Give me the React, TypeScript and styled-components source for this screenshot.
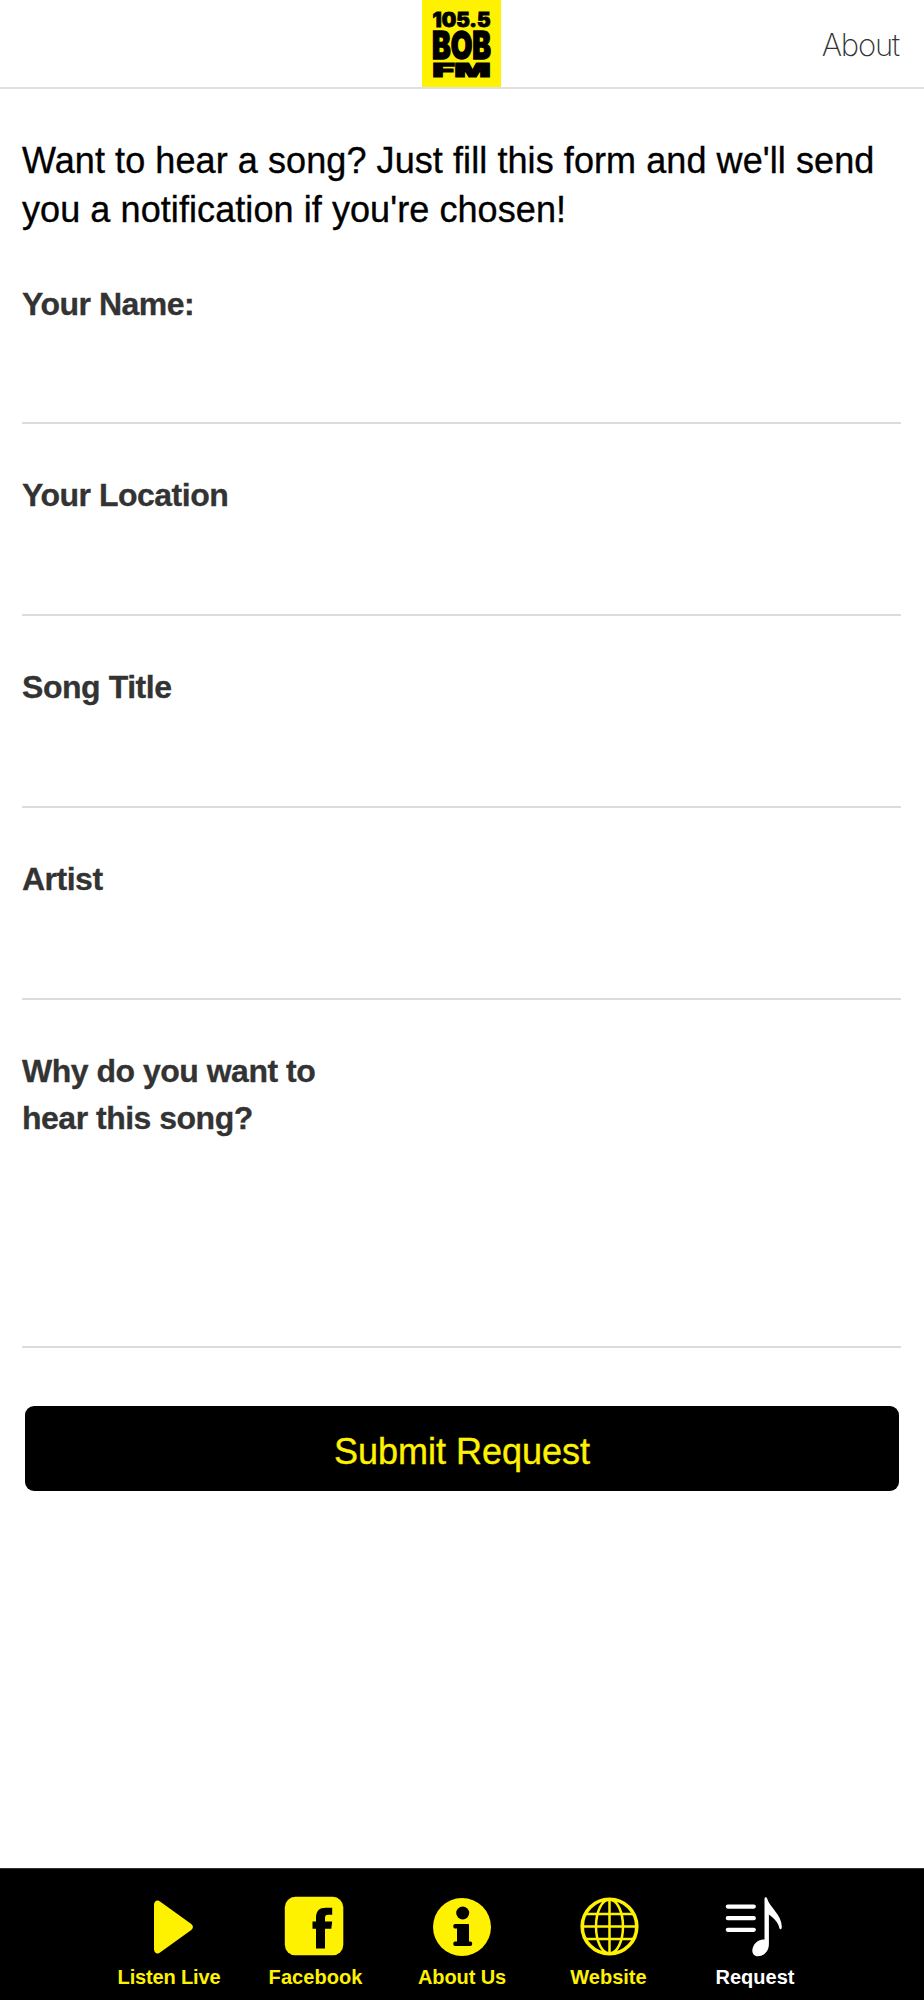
import React from "react";
import styled, { createGlobalStyle } from "styled-components";

const YELLOW = "#fff200";

const GlobalStyle = createGlobalStyle`
  * { box-sizing: border-box; }
  body {
    margin: 0;
    background: #fff;
    font-family: "Liberation Sans", Arial, sans-serif;
  }
`;

const Page = styled.div`
  display: flex;
  flex-direction: column;
  width: 924px;
  height: 2000px;
  background: #fff;
`;

const Header = styled.header`
  display: grid;
  grid-template-columns: 1fr 79px 1fr;
  height: 89px;
  padding: 0 24px 0 23px;
  border-bottom: 2px solid #e0e0e0;
`;

const Logo = styled.svg`
  grid-column: 2;
  display: block;
  width: 79px;
  height: 87px;
`;

const AboutLink = styled.a`
  justify-self: end;
  margin-right: 1px;
  font-family: Inter, "Liberation Sans", sans-serif;
  font-weight: 200;
  font-size: 31px;
  line-height: 90px;
  letter-spacing: -1.2px;
  color: #333;
`;

const Form = styled.form`
  display: flex;
  flex: 1;
  flex-direction: column;
  padding: 47px 23px 0 22px;
`;

const Intro = styled.p`
  margin: 0;
  height: 97px;
  font-size: 36px;
  line-height: 49px;
  letter-spacing: 0.08px;
  -webkit-text-stroke: 0.35px #000;
  color: #000;
  white-space: nowrap;
`;

const Field = styled.div<{ $height: number }>`
  display: flex;
  flex-direction: column;
  height: ${(p) => p.$height}px;
  padding-top: 48px;
  border-bottom: 2px solid #dcdcdc;
`;

const Label = styled.label<{ $spacing?: number }>`
  width: 330px;
  font-size: 32px;
  font-weight: 700;
  line-height: 47px;
  letter-spacing: ${(p) => p.$spacing ?? -0.5}px;
  -webkit-text-stroke: 0.3px #333;
  color: #333;
`;

const Input = styled.input`
  flex: 1;
  min-height: 0;
  padding: 0;
  border: 0;
  background: transparent;
  font-size: 32px;
  outline: none;
`;

const TextArea = styled.textarea`
  flex: 1;
  min-height: 0;
  padding: 0;
  border: 0;
  background: transparent;
  font-size: 32px;
  resize: none;
  outline: none;
`;

const SubmitButton = styled.button`
  height: 85px;
  margin: 58px 2px 0 3px;
  padding: 7px 0 0;
  border: 0;
  border-radius: 9px;
  background: #000;
  color: ${YELLOW};
  font-family: inherit;
  font-size: 36px;
  -webkit-text-stroke: 0.35px ${YELLOW};
`;

const TabBar = styled.nav`
  display: grid;
  grid-template-columns: repeat(5, 146.5px);
  justify-content: center;
  height: 132px;
  padding-top: 27px;
  border-top: 1px solid #333;
  background: #000;
`;

const Tab = styled.a<{ $active?: boolean }>`
  display: flex;
  flex-direction: column;
  align-items: center;
  color: ${(p) => (p.$active ? "#fff" : YELLOW)};
`;

const TabIcon = styled.svg`
  display: block;
  width: 60px;
  height: 62px;
  fill: currentColor;
  overflow: visible;
`;

const TabLabel = styled.span<{ $spacing: number }>`
  margin-top: 7px;
  font-size: 20px;
  font-weight: 700;
  line-height: 24px;
  letter-spacing: ${(p) => p.$spacing}px;
  white-space: nowrap;
`;

const StationLogo = () => (
  <Logo viewBox="0 0 79 87">
    <rect width="79" height="87" fill={YELLOW} />
    <g fontFamily="Inter" fontWeight="900" fill="#000" stroke="#000">
      <text x="10.5" y="26.5" fontSize="19.5" strokeWidth="0.8" textLength="58" lengthAdjust="spacingAndGlyphs">105.5</text>
      <text x="10" y="58.5" fontSize="38" strokeWidth="1.4" textLength="59" lengthAdjust="spacingAndGlyphs">BOB</text>
      <text x="10.5" y="76.7" fontSize="19" strokeWidth="1.2" textLength="58" lengthAdjust="spacingAndGlyphs">FM</text>
    </g>
  </Logo>
);

const PlayIcon = () => (
  <TabIcon viewBox="0 0 60 62">
    <path d="M15 9v44c0 4.200 3.400 5.600 6 3.600L52.300 34c2.200-1.800 2.200-4.200 0-6L21 5.400c-2.600-1.900-6-.6-6 3.600z" />
  </TabIcon>
);

const FacebookIcon = () => (
  <TabIcon viewBox="0 0 60 62">
    <rect x="-1.200" y="0.800" width="58.500" height="58.500" rx="10.500" />
    <path
      fill="#000"
      d="M30 52.500V32.800h-3.500v-7.300h3.500v-3.500c0-7.500 3.600-10.300 9.700-10.300h6.500v7h-3.700c-2.700 0-3.500 1-3.500 3.200v3.600h7.200l-.9 7.300h-6.300v19.700z"
    />
  </TabIcon>
);

const InfoIcon = () => (
  <TabIcon viewBox="0 0 60 62">
    <circle cx="30" cy="31" r="29" />
    <g fill="#000">
      <circle cx="30.700" cy="17" r="6.500" />
      <path d="M23 28h13c.7 0 1 .3 1 1v16.500h1.500c2.300 0 2.300 4.500 0 4.500H23c-2.300 0-2.300-4.500 0-4.500h2V32.500h-2c-2.300 0-2.300-4.500 0-4.500z" />
    </g>
  </TabIcon>
);

const GlobeIcon = () => (
  <TabIcon viewBox="0 0 60 62">
    <g fill="none" stroke="currentColor">
      <circle cx="30.500" cy="30.500" r="27.300" strokeWidth="3.600" />
      <ellipse cx="30.500" cy="30.500" rx="13.500" ry="27" strokeWidth="2.500" />
      <path strokeWidth="2.500" d="M30.500 4v54M3 30.500h55M7 18h47M7 43h47" />
    </g>
  </TabIcon>
);

const MusicIcon = () => (
  <TabIcon viewBox="0 0 60 62">
    <path fill="none" stroke="currentColor" strokeWidth="4.200" strokeLinecap="round" d="M2.800 10.600h26M2.800 22.200h26M2.800 33.800h26" />
    <path d="M39.500 3c0-2 2-2.400 2.600-.5 2.500 8.700 14.900 16.500 14.700 28.500-.1 3-2.300 3-2.700.3-.7-4.600-5-8.800-10.200-12.800V48c0 7.500-5.300 12.300-10.800 12.300-7.500 0-7.300-9.300-1.700-14.100 2.600-2.200 5.800-3 8.100-2.500z" />
  </TabIcon>
);

const fields = [
  { id: "name", label: "Your Name:", spacing: -0.5 },
  { id: "location", label: "Your Location", spacing: -0.5 },
  { id: "title", label: "Song Title", spacing: -0.45 },
  { id: "artist", label: "Artist", spacing: -0.5 },
];

const tabs = [
  { label: "Listen Live", Icon: PlayIcon, spacing: -0.15 },
  { label: "Facebook", Icon: FacebookIcon, spacing: 0.05 },
  { label: "About Us", Icon: InfoIcon, spacing: -0.1 },
  { label: "Website", Icon: GlobeIcon, spacing: 0 },
  { label: "Request", Icon: MusicIcon, spacing: 0, active: true },
];

export default function App() {
  return (
    <>
      <GlobalStyle />
      <Page>
        <Header>
          <StationLogo />
          <AboutLink>About</AboutLink>
        </Header>
        <Form>
          <Intro>
            Want to hear a song? Just fill this form and we'll send
            <br />
            you a notification if you're chosen!
          </Intro>
          {fields.map((f, i) => (
            <Field key={f.id} $height={i === 0 ? 191 : 192}>
              <Label htmlFor={f.id} $spacing={f.spacing}>{f.label}</Label>
              <Input id={f.id} />
            </Field>
          ))}
          <Field $height={348}>
            <Label htmlFor="reason">
              Why do you want to
              <br />
              hear this song?
            </Label>
            <TextArea id="reason" />
          </Field>
          <SubmitButton type="button">Submit Request</SubmitButton>
        </Form>
        <TabBar>
          {tabs.map(({ label, Icon, spacing, active }) => (
            <Tab key={label} $active={active}>
              <Icon />
              <TabLabel $spacing={spacing}>{label}</TabLabel>
            </Tab>
          ))}
        </TabBar>
      </Page>
    </>
  );
}
